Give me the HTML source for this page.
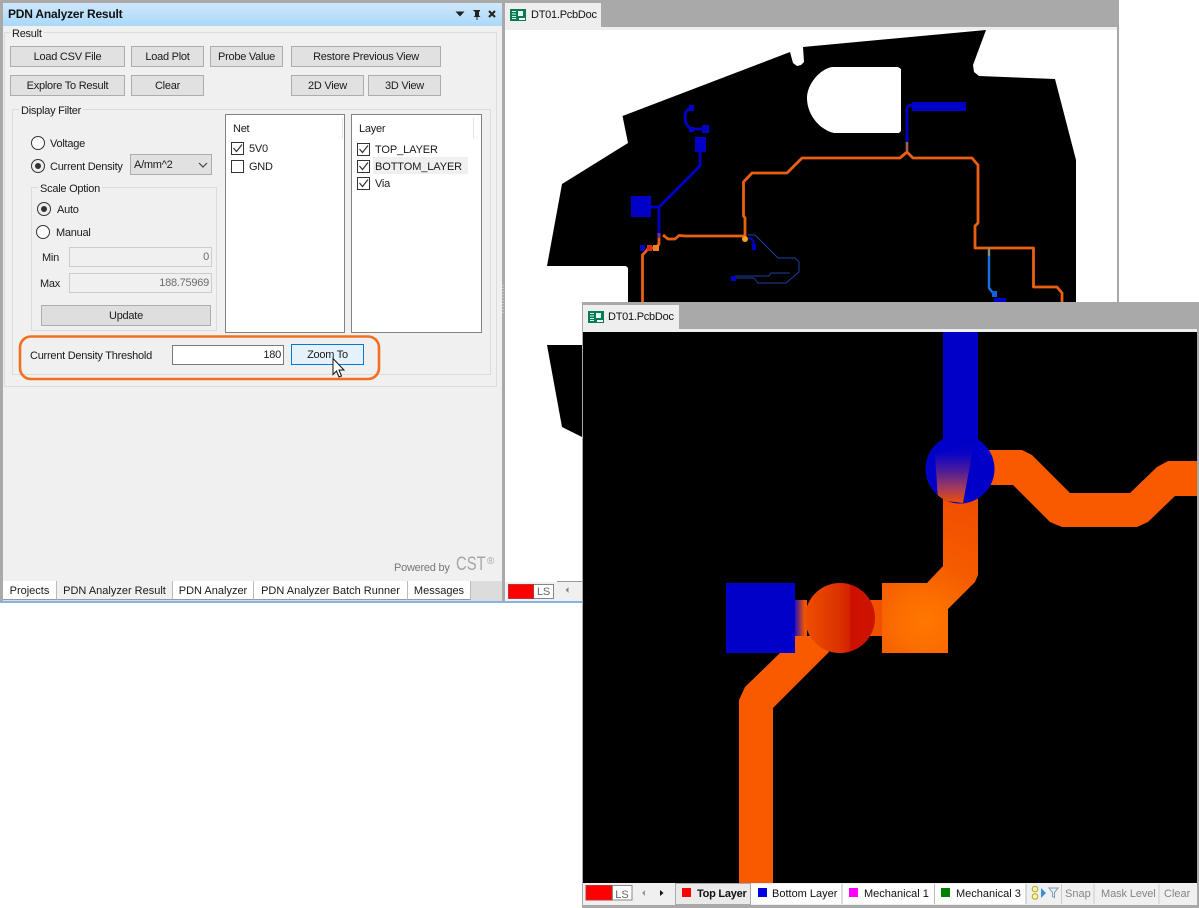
<!DOCTYPE html>
<html><head><meta charset="utf-8"><style>
html,body{margin:0;padding:0;background:#fff}
#r{position:relative;width:1199px;height:908px;overflow:hidden;background:#fff;font-family:"Liberation Sans",sans-serif;font-size:11px;letter-spacing:-.25px;color:#1a1a1a}
#r div{position:absolute;box-sizing:border-box;white-space:nowrap}
.t{line-height:16px;height:14px}
.b{background:#e1e1e1;border:1px solid #adadad;text-align:center;line-height:20px}
.g{border:1px solid #dcdcdc}
.rd{width:14px;height:14px;border-radius:50%;border:1.3px solid #333;background:#fff}
.rd.on::after{content:"";position:absolute;left:2.5px;top:2.5px;width:6.5px;height:6.5px;border-radius:50%;background:#333}
.rd.on{background:#eee}
.tab{background:#fff;border-right:1px solid #bbb;border-bottom:1px solid #999;text-align:center;line-height:20px;height:19px;top:581px;letter-spacing:0}
svg{position:absolute;left:0;top:0}
svg text{font-family:"Liberation Sans",sans-serif;font-size:11px;letter-spacing:0}
</style></head><body><div id="r">

<!-- Left panel -->
<div style="left:0;top:0;width:504px;height:603px;background:#a9a9a9"></div>
<div style="left:3px;top:3px;width:499px;height:23px;background:linear-gradient(#cfe7fa,#a9d9f9)"></div>
<div class="t" style="left:8px;top:6px;font-weight:bold;font-size:12px;letter-spacing:-.2px;color:#111">PDN Analyzer Result</div>
<div style="left:3px;top:26px;width:499px;height:555px;background:#f0f0f0"></div>
<div style="left:0;top:601px;width:504px;height:2px;background:#82b4e4"></div>

<div class="g" style="left:4px;top:32px;width:493px;height:355px"></div>
<div class="t" style="left:10px;top:26px;background:#f0f0f0;padding:0 2px">Result</div>
<div class="b" style="left:10px;top:46px;width:115px;height:21px">Load CSV File</div>
<div class="b" style="left:131px;top:46px;width:73px;height:21px">Load Plot</div>
<div class="b" style="left:210px;top:46px;width:73px;height:21px">Probe Value</div>
<div class="b" style="left:291px;top:46px;width:150px;height:21px">Restore Previous View</div>
<div class="b" style="left:10px;top:75px;width:115px;height:21px">Explore To Result</div>
<div class="b" style="left:131px;top:75px;width:73px;height:21px">Clear</div>
<div class="b" style="left:291px;top:75px;width:73px;height:21px">2D View</div>
<div class="b" style="left:368px;top:75px;width:73px;height:21px">3D View</div>

<div class="g" style="left:12px;top:109px;width:479px;height:266px"></div>
<div class="t" style="left:19px;top:103px;background:#f0f0f0;padding:0 2px">Display Filter</div>
<div class="rd" style="left:31px;top:136px"></div>
<div class="t" style="left:50px;top:136px">Voltage</div>
<div class="rd on" style="left:31px;top:159px"></div>
<div class="t" style="left:50px;top:159px">Current Density</div>
<div class="b" style="left:130px;top:154px;width:82px;height:21px;text-align:left;padding-left:3px">A/mm^2</div>

<div class="g" style="left:31px;top:187px;width:186px;height:144px"></div>
<div class="t" style="left:38px;top:181px;background:#f0f0f0;padding:0 2px">Scale Option</div>
<div class="rd on" style="left:37px;top:202px"></div>
<div class="t" style="left:57px;top:202px">Auto</div>
<div class="rd" style="left:36px;top:225px"></div>
<div class="t" style="left:56px;top:225px">Manual</div>
<div class="t" style="left:42px;top:250px">Min</div>
<div class="t" style="left:40px;top:276px">Max</div>
<div style="left:69px;top:247px;width:143px;height:20px;background:#f0f0f0;border:1px solid #ccc;text-align:right;padding-right:2px;line-height:19px;color:#6d6d6d">0</div>
<div style="left:69px;top:273px;width:143px;height:20px;background:#f0f0f0;border:1px solid #ccc;text-align:right;padding-right:2px;line-height:19px;color:#6d6d6d">188.75969</div>
<div class="b" style="left:41px;top:305px;width:170px;height:21px;background:#dedede">Update</div>

<div style="left:225px;top:114px;width:120px;height:219px;background:#fff;border:1px solid #828282"></div>
<div style="left:342px;top:118px;width:1px;height:21px;background:#e5e5e5"></div>
<div class="t" style="left:233px;top:121px">Net</div>
<div class="t" style="left:249px;top:141px">5V0</div>
<div class="t" style="left:249px;top:159px">GND</div>

<div style="left:351px;top:114px;width:131px;height:219px;background:#fff;border:1px solid #828282"></div>
<div style="left:473px;top:118px;width:1px;height:21px;background:#e5e5e5"></div>
<div style="left:373px;top:157px;width:95px;height:17px;background:#f0f0f0"></div>
<div class="t" style="left:359px;top:121px">Layer</div>
<div class="t" style="left:375px;top:142px;letter-spacing:-.1px">TOP_LAYER</div>
<div class="t" style="left:375px;top:159px;letter-spacing:-.1px">BOTTOM_LAYER</div>
<div class="t" style="left:375px;top:176px">Via</div>

<div class="t" style="left:30px;top:348px">Current Density Threshold</div>
<div style="left:172px;top:345px;width:112px;height:20px;background:#fff;border:1px solid #7a7a7a;text-align:right;padding-right:2px;line-height:19px">180</div>
<div class="b" style="left:291px;top:344px;width:73px;height:21px;background:#e5f1fb;border-color:#0078d7">Zoom To</div>

<div class="t" style="left:394px;top:560px;color:#777">Powered by</div>
<div style="left:456px;top:555px;font-size:19px;letter-spacing:0;line-height:20px;color:#a6a6a6;transform:scaleX(.78);transform-origin:left top">CST</div>
<div style="left:487px;top:556px;font-size:10px;letter-spacing:0;line-height:12px;color:#a6a6a6">®</div>

<div style="left:3px;top:581px;width:499px;height:20px;background:#dcdcdc"></div>
<div class="tab" style="left:3px;width:54px">Projects</div>
<div class="tab" style="left:57px;width:116px;background:#f0f0f0">PDN Analyzer Result</div>
<div class="tab" style="left:173px;width:81px">PDN Analyzer</div>
<div class="tab" style="left:254px;width:154px">PDN Analyzer Batch Runner</div>
<div class="tab" style="left:408px;width:63px">Messages</div>

<!-- Back document window -->
<div style="left:504px;top:0;width:615px;height:603px;background:#a9a9a9"></div>
<div style="left:505px;top:27px;width:612px;height:3px;background:#eee"></div>
<div style="left:505px;top:30px;width:612px;height:551px;background:#fff"></div>
<div style="left:505px;top:3px;width:96px;height:27px;background:#eee"></div>
<div class="t" style="left:531px;top:7px;color:#111">DT01.PcbDoc</div>
<div style="left:505px;top:581px;width:78px;height:20px;background:#f0f0f0;border-top:1px solid #fff"></div>
<div style="left:557px;top:581px;width:26px;height:1px;background:#999"></div>
<div style="left:505px;top:601px;width:78px;height:2px;background:#82b4e4"></div>
<div style="left:508px;top:584px;width:26px;height:15px;background:#f00;border:1px solid #b33"></div>
<div style="left:534px;top:584px;width:20px;height:15px;background:#fff;border:1px solid #888;border-left:0;text-align:center;line-height:15px;color:#666">LS</div>

<svg width="1199" height="908" viewBox="0 0 1199 908" style="z-index:1">
<!-- Back board -->
<path fill="#000" fill-rule="evenodd" d="M986 30 L803 47 L804 62 L801 65 L797 66 L793 63 L790 52 L622.5 116 L628 143 L562 184 L547 266 L626 266 L628 268 L628 302 L1076 302 L1076 160 L1055 79 L979 76 L974 72 L973 65 Z M832 67 L898 67 L901 69 L901 131 L899 133 L834 133 C820 130 807 115 807 98 C807 84 820 69 832 67 Z"/>
<path fill="#000" d="M547 345 L590 345 L590 441 L582 437 L562 427 Z"/>
<!-- Back traces -->
<g fill="none" stroke-linejoin="round">
<path stroke="#ea5f12" stroke-width="2.8" d="M642.5 302 L642.5 255 L648 249 L657 247 L659 244 L659 236 M663 235 L668 239 L675 239 L679 235.5 L685 236 L745 236 M745 238 L745 218 L743.5 216 L743.5 182 L752 173 L787 173 L802 158 L900 158 L907 152 L913 158 L972 158 L978 165 L978 223 L975 226 L975 248 L1033.5 248 L1033.5 287 L1057 287 L1062 293 L1062 302"/>
<path stroke="#0000c8" stroke-width="2.8" d="M907 142 L907 110 Q907 105 912 105 M659 236 L659 207 L700 166 L700 140 M651 207 L659 207 M705 129 L691 129 Q685 125 685 117 Q685 110 691 108"/>
<path stroke="#1a3fa0" stroke-width="1" d="M748 235 L755 235 L778 258 L795 258 L799 262 L799 272 L786 283 L758 283 L754 278 L733 278 M735 276 L769 276 L771 273 L790 273"/>
<path stroke="#1a70e0" stroke-width="2.4" d="M989 256 L989 288 L993 293"/>
<path stroke="#8a8a80" stroke-width="2.4" d="M989 248 L989 256"/>
<path stroke="#0000c8" stroke-width="2" d="M748 238 Q754 238 754 246"/>
</g>
<path fill="#7a3090" d="M657.5 233h3v5h-3z"/>
<rect x="905.7" y="142" width="2.6" height="9" fill="#a8604a"/>
<g fill="#0000c8">
<rect x="912" y="102" width="54" height="9"/>
<rect x="631" y="196" width="20" height="21"/>
<rect x="695" y="137" width="11" height="15"/>
<rect x="702" y="125" width="7" height="8"/>
<rect x="689" y="105" width="5" height="6"/>
<rect x="689" y="127" width="5" height="5"/>
<rect x="640" y="245" width="5" height="6"/>
<rect x="752" y="244" width="4" height="6"/>
<rect x="731" y="276" width="5" height="5"/>
<rect x="994" y="298" width="12" height="4"/>
</g>
<rect x="647" y="245" width="5" height="6" fill="#d83010"/>
<rect x="653" y="245" width="6" height="6" fill="#f58020"/>
<circle cx="745" cy="239" r="3" fill="#f5a020"/>
<rect x="992" y="291" width="5" height="6" fill="#1560d8"/>
<!-- Checkboxes -->
<g fill="#fff" stroke="#333" stroke-width="1">
<rect x="231.5" y="142.5" width="12" height="12"/><rect x="231.5" y="160.5" width="12" height="12"/>
<rect x="357.5" y="143.5" width="12" height="12"/><rect x="357.5" y="160.5" width="12" height="12"/><rect x="357.5" y="177.5" width="12" height="12"/>
</g>
<g fill="none" stroke="#333" stroke-width="1.2">
<path d="M233.5 148l3 3.5 5.5-7"/><path d="M359.5 149l3 3.5 5.5-7"/><path d="M359.5 166l3 3.5 5.5-7"/><path d="M359.5 183l3 3.5 5.5-7"/>
<path d="M199 163l4 4 4-4" stroke="#444"/>
</g>
<!-- Title icons -->
<path d="M455.500 11.500h9l-4.500 5z" fill="#222"/>
<path d="M473 10h7v1.500h-1v4l1.500 1.500h-3v3h-1v-3h-3l1.500-1.500v-4h-1z" fill="#222"/>
<path d="M489 11l6 6M495 11l-6 6" stroke="#222" stroke-width="2" fill="none"/>
<!-- Doc icon -->
<g><rect x="510" y="9" width="16" height="12" fill="#0a7a55"/><path d="M512 11h4v1h-4zM512 13.500h4v1h-4zM512 16h4v1h-4zM512 18h4v1h-4z" fill="#cfe"/><rect x="518" y="11" width="5" height="5" fill="#dfe"/><rect x="519" y="18" width="6" height="2" fill="#fff"/></g>
<path d="M568.500 587v6l-3-3z" fill="#888"/>
<!-- Orange callout -->
<rect x="20" y="336.500" width="359" height="42.500" rx="11" fill="none" stroke="#f07020" stroke-width="2.600"/>
<!-- Splitter dots -->
<path d="M503 285v28" stroke="#ddd" stroke-dasharray="1 2" stroke-width="1"/>
</svg>

<!-- Front document window -->
<div style="left:582px;top:302px;width:617px;height:606px;background:#a9a9a9;z-index:2"></div>
<div style="left:583px;top:329px;width:614px;height:3px;background:#eee;z-index:2"></div>
<div style="left:583px;top:305px;width:96px;height:27px;background:#eee;z-index:2"></div>
<div class="t" style="left:608px;top:309px;color:#111;z-index:2">DT01.PcbDoc</div>
<div style="left:583px;top:332px;width:614px;height:551px;background:#000;z-index:2"></div>
<div style="left:583px;top:883px;width:614px;height:22px;background:#f0f0f0;z-index:2"></div>

<svg width="1199" height="908" viewBox="0 0 1199 908" style="z-index:3">
<defs>
<clipPath id="c"><rect x="583" y="332" width="614" height="551"/></clipPath>
<linearGradient id="w" x1="0" y1="0" x2="0" y2="1"><stop offset="0" stop-color="#0000c8"/><stop offset=".18" stop-color="#0a04c4"/><stop offset=".45" stop-color="#4a1a9c"/><stop offset=".75" stop-color="#a03a60"/><stop offset="1" stop-color="#f05000"/></linearGradient>
<radialGradient id="s" gradientUnits="userSpaceOnUse" cx="925" cy="622" r="130"><stop offset="0" stop-color="#ff7800"/><stop offset=".2" stop-color="#fb6e00"/><stop offset=".45" stop-color="#f55c00"/><stop offset="1" stop-color="#f04e00"/></radialGradient>
<linearGradient id="rc" x1="0" y1="0" x2="1" y2="0"><stop offset="0" stop-color="#ee4e00"/><stop offset=".45" stop-color="#dd3500"/><stop offset=".62" stop-color="#d42500"/><stop offset=".66" stop-color="#cc1000"/><stop offset="1" stop-color="#cc1400"/></linearGradient>
<linearGradient id="bo" x1="0" y1="0" x2="1" y2="0"><stop offset="0" stop-color="#2a10b8"/><stop offset=".8" stop-color="#f05500"/><stop offset="1" stop-color="#f05500"/></linearGradient>
<clipPath id="vc"><circle cx="960" cy="469" r="34.500"/></clipPath>
</defs>
<g clip-path="url(#c)">
<rect x="943" y="332" width="35" height="120" fill="#0000c8"/>
<path fill="#f95a00" d="M985 450 L1022 450 L1032 455 L1070 493 L1130 493 L1157 467 L1168 461 L1197 461 L1197 496 L1175 496 L1148 522 L1137 527 L1062 527 L1050 522 L1013 485 L985 485Z"/>
<path fill="#f95a00" d="M795 636 L840 636 L828 653 L773 708 L773 883 L739 883 L739 700 L745 687 L780 653 L795 653Z"/>
<rect x="795" y="600" width="12" height="36" fill="url(#bo)"/>
<rect x="870" y="600" width="14" height="36" fill="#f05000"/>
<path fill="url(#s)" d="M943 495 L978 495 L978 575 L975 582 L948 609 L948 653 L882 653 L882 583 L927 583 L943 566Z"/>
<rect x="726" y="583" width="69" height="70" fill="#0000c8"/>
<circle cx="840" cy="618" r="35" fill="url(#rc)"/>
<circle cx="960" cy="469" r="34.500" fill="#0000c8"/>
<path d="M935 455 L974 443 L963 503 L938 500Z" fill="url(#w)" clip-path="url(#vc)"/>
</g>
<!-- Status bar -->
<rect x="586" y="885.500" width="26" height="14.500" fill="#f00" stroke="#b33" stroke-width="1"/>
<rect x="612.500" y="885.500" width="19.500" height="14.500" fill="#fff" stroke="#888"/>
<path d="M645 890v6l-3-3z" fill="#999"/><path d="M660 890v6l3.500-3z" fill="#111"/>
<rect x="675.500" y="883.500" width="75" height="21" fill="#eaeaea" stroke="#aaa"/>
<rect x="751" y="884" width="275" height="20" fill="#fff"/>
<path d="M842 884v20M934.500 884v20M1026 884v20" stroke="#bbb"/>
<rect x="682" y="888" width="9" height="9" fill="#f00"/>
<rect x="758" y="888" width="9" height="9" fill="#0000e0"/>
<rect x="849" y="888" width="9" height="9" fill="#f0f"/>
<rect x="941" y="888" width="9" height="9" fill="#008000"/>
<circle cx="1035" cy="889" r="2.800" fill="#f4f4b0" stroke="#b5a820"/>
<circle cx="1035" cy="896.500" r="2.800" fill="#f4f4b0" stroke="#b5a820"/>
<path d="M1041 888v10l5-5z" fill="#3a8fd8"/>
<path d="M1049 888h9l-3.500 4.500v5l-2-1v-4z" fill="#e8f0f8" stroke="#7a9ab8"/>
<path d="M1061.500 884v20M1094 884v20M1159 884v20" stroke="#ccc"/>
<text x="1065" y="897" fill="#858585">Snap</text>
<text x="1101" y="897" fill="#858585" style="letter-spacing:-.1px">Mask Level</text>
<text x="1164" y="897" fill="#858585">Clear</text>
<text x="622" y="898" text-anchor="middle" fill="#666">LS</text>
<text x="697" y="897" font-weight="bold" fill="#111" style="letter-spacing:-.25px">Top Layer</text>
<text x="772" y="897" fill="#111">Bottom Layer</text>
<text x="864" y="897" fill="#111">Mechanical 1</text>
<text x="956" y="897" fill="#111">Mechanical 3</text>
<!-- Doc icon -->
<g><rect x="588" y="311" width="16" height="12" fill="#0a7a55"/><path d="M590 313h4v1h-4zM590 315.500h4v1h-4zM590 318h4v1h-4zM590 320h4v1h-4z" fill="#cfe"/><rect x="596" y="313" width="5" height="5" fill="#dfe"/><rect x="597" y="320" width="6" height="2" fill="#fff"/></g>
</svg>
<!-- Cursor over button text -->
<svg width="1199" height="908" viewBox="0 0 1199 908" style="z-index:4">
<path d="M333 358.500 V374.500 L336.500 371 L339 377 L341.500 376 L339 370 L344 370 Z" fill="#fff" stroke="#111" stroke-width="1"/>
</svg>
</div></body></html>
